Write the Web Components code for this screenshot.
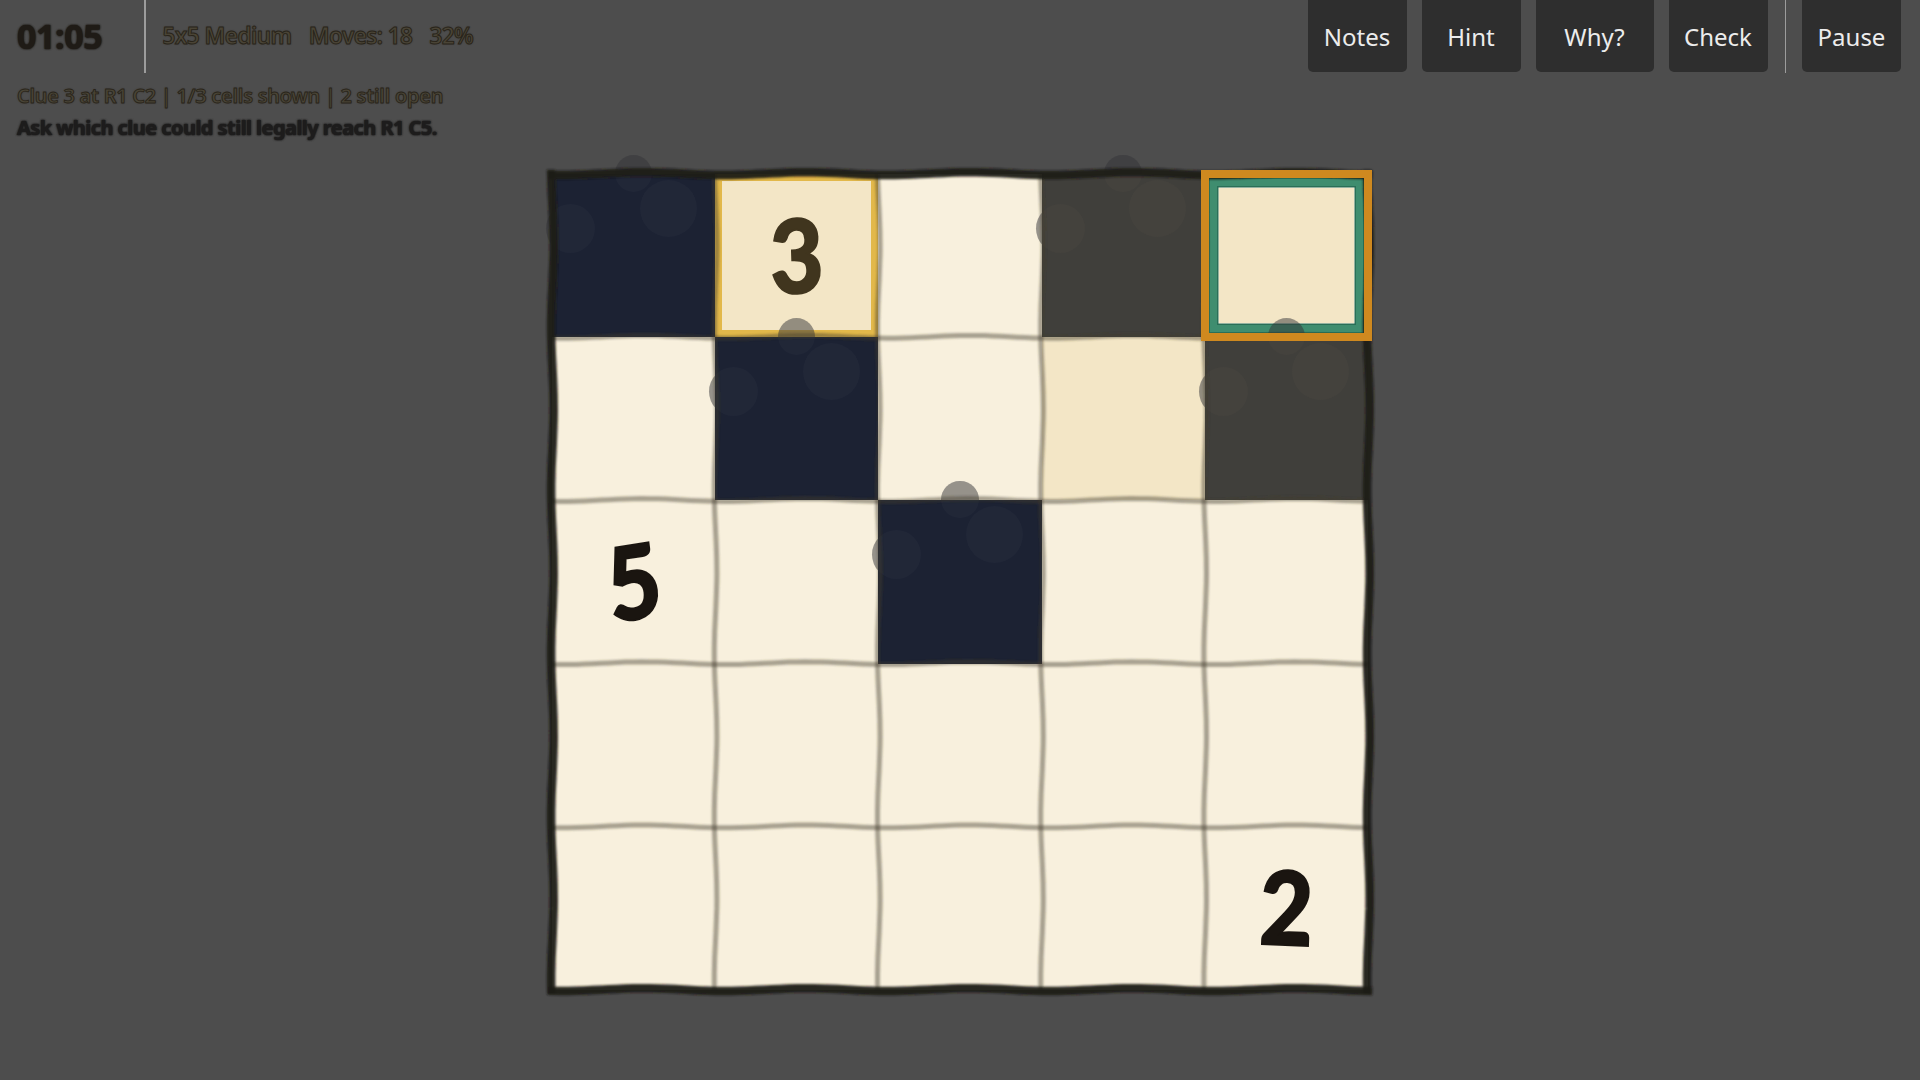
<!doctype html>
<html><head><meta charset="utf-8">
<style>
html,body{margin:0;height:100%;background:#4d4d4d;overflow:hidden}
body{font-family:"Noto Sans","Open Sans",sans-serif}
</style></head>
<body>
<game-bar>
  <span slot="timer">01:05</span>
  <span slot="meta">5x5 Medium</span><span slot="meta">Moves: 18</span><span slot="meta">32%</span>
  <bar-button slot="actions">Notes</bar-button>
  <bar-button slot="actions">Hint</bar-button>
  <bar-button slot="actions" wide>Why?</bar-button>
  <bar-button slot="actions">Check</bar-button>
  <bar-button slot="end">Pause</bar-button>
</game-bar>
<status-lines>
  <span slot="info">Clue 3 at R1 C2 | 1/3 cells shown | 2 still open</span>
  <span slot="ask">Ask which clue could still legally reach R1 C5.</span>
</status-lines>
<puzzle-board>
  <puzzle-cell kind="navy"></puzzle-cell>
  <puzzle-cell kind="clue" tone="soft" tilt="-2">3</puzzle-cell>
  <puzzle-cell></puzzle-cell>
  <puzzle-cell kind="slate"></puzzle-cell>
  <puzzle-cell kind="selected"></puzzle-cell>

  <puzzle-cell></puzzle-cell>
  <puzzle-cell kind="navy"></puzzle-cell>
  <puzzle-cell></puzzle-cell>
  <puzzle-cell kind="tint"></puzzle-cell>
  <puzzle-cell kind="slate"></puzzle-cell>

  <puzzle-cell tilt="-8">5</puzzle-cell>
  <puzzle-cell></puzzle-cell>
  <puzzle-cell kind="navy"></puzzle-cell>
  <puzzle-cell></puzzle-cell>
  <puzzle-cell></puzzle-cell>

  <puzzle-cell></puzzle-cell><puzzle-cell></puzzle-cell><puzzle-cell></puzzle-cell><puzzle-cell></puzzle-cell><puzzle-cell></puzzle-cell>

  <puzzle-cell></puzzle-cell><puzzle-cell></puzzle-cell><puzzle-cell></puzzle-cell><puzzle-cell></puzzle-cell>
  <puzzle-cell tilt="2">2</puzzle-cell>
</puzzle-board>
<script>
function def(name, css, html, extra){
  customElements.define(name, class extends HTMLElement{
    constructor(){super();const r=this.attachShadow({mode:'open'});r.innerHTML='<style>'+css+'</style>'+html;if(extra)extra(r,this);}
  });
}
def('game-bar',`
  :host{display:flex;align-items:stretch;height:72px;box-sizing:border-box;padding:0 19px 0 17px}
  .timer{width:127px;display:flex;align-items:center}
  ::slotted([slot=timer]){font-size:34px;font-weight:700;color:#1f1b16;text-shadow:0 0 2px #1f1b16,0 0 2px #1f1b16,0 0 1px #1f1b16;letter-spacing:-.4px}
  .sep{width:1.5px;background:#9c9c9c;flex:none;height:73px}
  .meta{display:flex;align-items:center;gap:17px;margin:-2px 0 0 17px;flex:1}
  ::slotted([slot=meta]){font-size:22.5px;font-weight:600;color:#4a4436;-webkit-text-stroke:.9px #29241a;text-shadow:0 0 1.5px #29241a;letter-spacing:-.55px}
  ::slotted([slot=meta]:first-of-type){letter-spacing:.05px}
  .actions{display:flex;gap:15px}
  .end{margin:0 0 0 16px;display:flex}
`,`<div class="timer"><slot name="timer"></slot></div><div class="sep"></div>
  <div class="meta"><slot name="meta"></slot></div>
  <div class="actions"><slot name="actions"></slot></div>
  <div class="sep" style="margin-left:17px"></div>
  <div class="end"><slot name="end"></slot></div>`);
def('bar-button',`
  :host{display:flex;align-items:center;justify-content:center;width:99px;height:72px;background:#2e2e2e;color:#ececec;border-radius:0 0 5px 5px;font-size:24px;box-sizing:border-box;flex:none}
  :host([wide]){width:118px}
`,`<slot></slot>`);
def('status-lines',`
  :host{display:flex;flex-direction:column;padding:8px 17px 0;height:72px;box-sizing:border-box}
  ::slotted([slot=info]){font-size:20px;line-height:32px;font-weight:600;color:#4a4436;-webkit-text-stroke:.8px #29241a;text-shadow:0 0 1.5px #29241a;letter-spacing:-.3px}
  ::slotted([slot=ask]){font-size:20px;line-height:31px;font-weight:700;color:#1d1c1c;text-shadow:0 0 2px #1d1c1c,0 0 2px #1d1c1c,0 0 1px #1d1c1c;letter-spacing:-.55px}
`,`<slot name="info"></slot><slot name="ask"></slot>`);
def('puzzle-board',`
  :host{display:block;position:relative;width:816px;height:816px;margin:30px auto 0}
  .grid{display:grid;grid-template-columns:repeat(5,163.2px);grid-template-rows:repeat(5,163.2px);width:816px;height:816px}
  svg{position:absolute;left:0;top:0;width:816px;height:816px;overflow:visible;z-index:2;pointer-events:none}
`,`<div class="grid"><slot></slot></div><svg viewBox="0 0 816 816" fill="none" stroke-linejoin="round"></svg>`,(r)=>{
  const svg=r.querySelector('svg');const C=163.2;
  const off=(u,amp)=>{const t=u-Math.floor(u);const s=Math.sin(Math.PI*t);return amp*(s*s-.35)+.5*Math.sin(2*Math.PI*t);};
  const line=(h,p)=>{const pts=[];for(let i=0;i<=100;i++){const u=i/20,d=u*C;const o=off(u,h?-2.6:2.4);pts.push(h?[d,p+o]:[p+o,d]);}
    return 'M'+pts.map(a=>a[0].toFixed(1)+' '+a[1].toFixed(1)).join('L');};
  let out='<g filter="url(#b)">';
  for(let i=1;i<5;i++){for(const h of [true,false])out+=`<path d="${line(h,i*C)}" stroke="#3f3a2c" stroke-opacity=".44" stroke-width="5"/>`;}
  for(const i of [0,5]){for(const h of [true,false])out+=`<path d="${line(h,i*C)}" stroke="#1e1a15" stroke-opacity=".95" stroke-width="8.5" stroke-linecap="square"/>`;}
  out+='</g><defs><filter id="b" x="-5%" y="-5%" width="110%" height="110%"><feGaussianBlur stdDeviation=".8"/></filter></defs>';
  svg.innerHTML=out;
});
def('puzzle-cell',`
  :host{display:flex;align-items:center;justify-content:center;position:relative;background:#f8f0dd;font-family:"Lato",sans-serif;font-weight:900;font-size:102px;color:#1a1510;line-height:1}
  :host([kind=clue]){background:#f3e6c6;box-shadow:inset 0 0 0 7px #e2b84a}
  :host([kind=tint]){background:#f3e6c6}
  :host([kind=selected]){background:#f3e6c6}
  :host([tone=soft]){color:#40351e}
  .num{display:inline-block;transform:translateY(-2px) scaleX(.9) rotate(var(--t,0deg));position:relative;-webkit-text-stroke:2px currentColor}
  .halo,.fill{display:none}
  :host([kind=navy]),:host([kind=slate]){z-index:1}
  :host([kind=navy]) .halo,:host([kind=slate]) .halo{display:block}
  :host([kind=navy]) .fill,:host([kind=slate]) .fill{display:block;position:absolute;inset:0;background:var(--fill);overflow:hidden}
  :host([kind=navy]){--fill:#1c2233;--g:rgba(255,255,255,.022)}
  :host([kind=slate]){--fill:#403f3b;--g:rgba(255,225,190,.022)}
  .halo i,.fill i{position:absolute;border-radius:50%;display:block}
  .halo i{background:rgba(52,52,56,.5)}
  .fill i{background:var(--g)}
  .a{left:62.8px;top:-19.5px;width:37.5px;height:37.5px}
  .b{left:87.6px;top:5.6px;width:57px;height:57px}
  .c{left:-6px;top:29.5px;width:49px;height:49px}
  .ring,.outer{display:none}
  :host([kind=selected]) .ring{display:block;position:absolute;inset:4px;box-sizing:border-box;border:8px solid #3f8d6f;outline:1.5px solid #2a6f57;outline-offset:-1.5px;box-shadow:inset 0 0 0 1.5px #2a6f57,inset 0 0 0 2px #fbf7ea}
  :host([kind=selected]) .outer{display:block;position:absolute;inset:-4px;box-sizing:border-box;border:8px solid #cf891f;z-index:3}
`,`<div class="halo"><i class="a"></i><i class="b"></i><i class="c"></i></div>
  <div class="fill"><i class="a"></i><i class="b"></i><i class="c"></i></div>
  <div class="ring"></div><div class="outer"></div>
  <span class="num"><slot></slot></span>`,(r,el)=>{
    const t=el.getAttribute('tilt'); if(t) r.querySelector('.num').style.setProperty('--t',t+'deg');
});
</script>
</body></html>
